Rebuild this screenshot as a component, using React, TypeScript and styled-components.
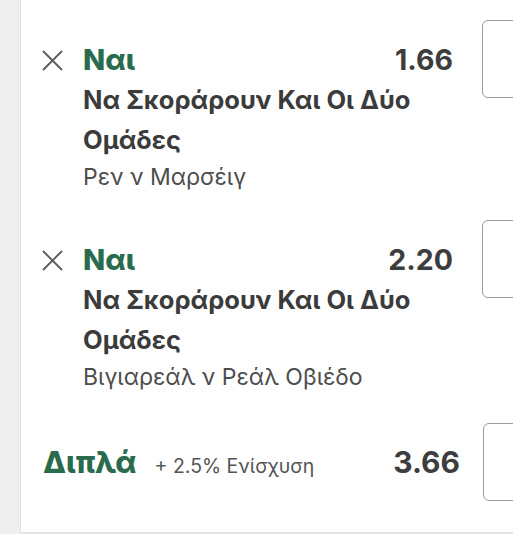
import React from 'react';
import styled, { createGlobalStyle } from 'styled-components';

const GlobalStyle = createGlobalStyle`
  html, body {
    margin: 0;
    padding: 0;
    background: #efefef;
  }
  body {
    font-family: Inter, "Noto Sans", "Liberation Sans", sans-serif;
    color: #3b3b3b;
  }
`;

type Selection = {
  pick: string;
  market: string;
  event: string;
  odds: string;
};

const selections: Selection[] = [
  {
    pick: 'Ναι',
    market: 'Να Σκοράρουν Και Οι Δύο Ομάδες',
    event: 'Ρεν ν Μαρσέιγ',
    odds: '1.66',
  },
  {
    pick: 'Ναι',
    market: 'Να Σκοράρουν Και Οι Δύο Ομάδες',
    event: 'Βιγιαρεάλ ν Ρεάλ Οβιέδο',
    odds: '2.20',
  },
];

const CloseIcon = () => (
  <svg width="21" height="21" viewBox="0 0 21 21" fill="none">
    <path d="M1 1 L20 20 M20 1 L1 20" stroke="#5a5a5a" strokeWidth="1.8" />
  </svg>
);

const App = () => (
  <>
    <GlobalStyle />
    <Page>
      <Panel>
        {selections.map((s, i) => (
          <SelectionRow key={i} first={i === 0}>
            <IconCell>
              <CloseIcon />
            </IconCell>
            <Content>
              <HeaderLine>
                <Pick>{s.pick}</Pick>
                <Odds>{s.odds}</Odds>
              </HeaderLine>
              <Market>{s.market}</Market>
              <EventName>{s.event}</EventName>
            </Content>
            <StakeBox />
          </SelectionRow>
        ))}
        <TotalRow>
          <TotalInfo>
            <TotalLabel>Διπλά</TotalLabel>
            <Boost>+ 2.5% Ενίσχυση</Boost>
          </TotalInfo>
          <TotalOdds>3.66</TotalOdds>
          <StakeBox />
        </TotalRow>
      </Panel>
    </Page>
  </>
);

const Page = styled.div`
  width: 513px;
  height: 534px;
  padding-left: 20px;
  box-sizing: border-box;
  overflow: hidden;
`;

const Panel = styled.div`
  background: #fff;
  border-left: 1px solid #e2e2e2;
  border-bottom: 2px solid #e4e4e4;
  height: 532px;
  box-sizing: content-box;
  overflow: hidden;
  padding-left: 21px;
  display: flex;
  flex-direction: column;
`;

const SelectionRow = styled.div<{ first?: boolean }>`
  display: flex;
  align-items: flex-start;
  margin-top: ${(p) => (p.first ? '20px' : '26px')};
`;

const IconCell = styled.div`
  width: 21px;
  height: 21px;
  margin-top: 30px;
  margin-right: 20px;
  flex-shrink: 0;
  display: flex;
`;

const Content = styled.div`
  width: 370px;
  padding-top: 20px;
  flex-shrink: 0;
`;

const HeaderLine = styled.div`
  display: flex;
  justify-content: space-between;
  align-items: baseline;
  height: 40px;
  line-height: 40px;
`;

const Pick = styled.span`
  color: #2a6b4e;
  font-size: 29px;
  font-weight: 800;
`;

const Odds = styled.span`
  font-size: 28.5px;
  font-weight: 700;
  color: #3d3d3d;
`;

const Market = styled.div`
  font-size: 25.5px;
  font-weight: 700;
  line-height: 40px;
  color: #3b3b3b;
  width: 345px;
`;

const EventName = styled.div`
  font-size: 23px;
  font-weight: 400;
  line-height: 34px;
  color: #4d4d4d;
`;

const StakeBox = styled.div`
  width: 60px;
  height: 78px;
  margin-left: 29px;
  flex-shrink: 0;
  border: 1.5px solid #9c9c9c;
  border-radius: 6px;
  box-sizing: border-box;
`;

const TotalRow = styled.div`
  display: flex;
  align-items: center;
  margin-top: 29px;
`;

const TotalInfo = styled.div`
  display: flex;
  align-items: baseline;
  gap: 18px;
  width: 340px;
  padding-left: 1px;
  flex-shrink: 0;
`;

const TotalLabel = styled.span`
  color: #2a6b4e;
  font-size: 30px;
  font-weight: 800;
`;

const Boost = styled.span`
  font-size: 19.5px;
  color: #555;
`;

const TotalOdds = styled.span`
  width: 77px;
  flex-shrink: 0;
  text-align: right;
  font-size: 30px;
  font-weight: 700;
  color: #3d3d3d;
  margin-right: -6px;
`;

export default App;
